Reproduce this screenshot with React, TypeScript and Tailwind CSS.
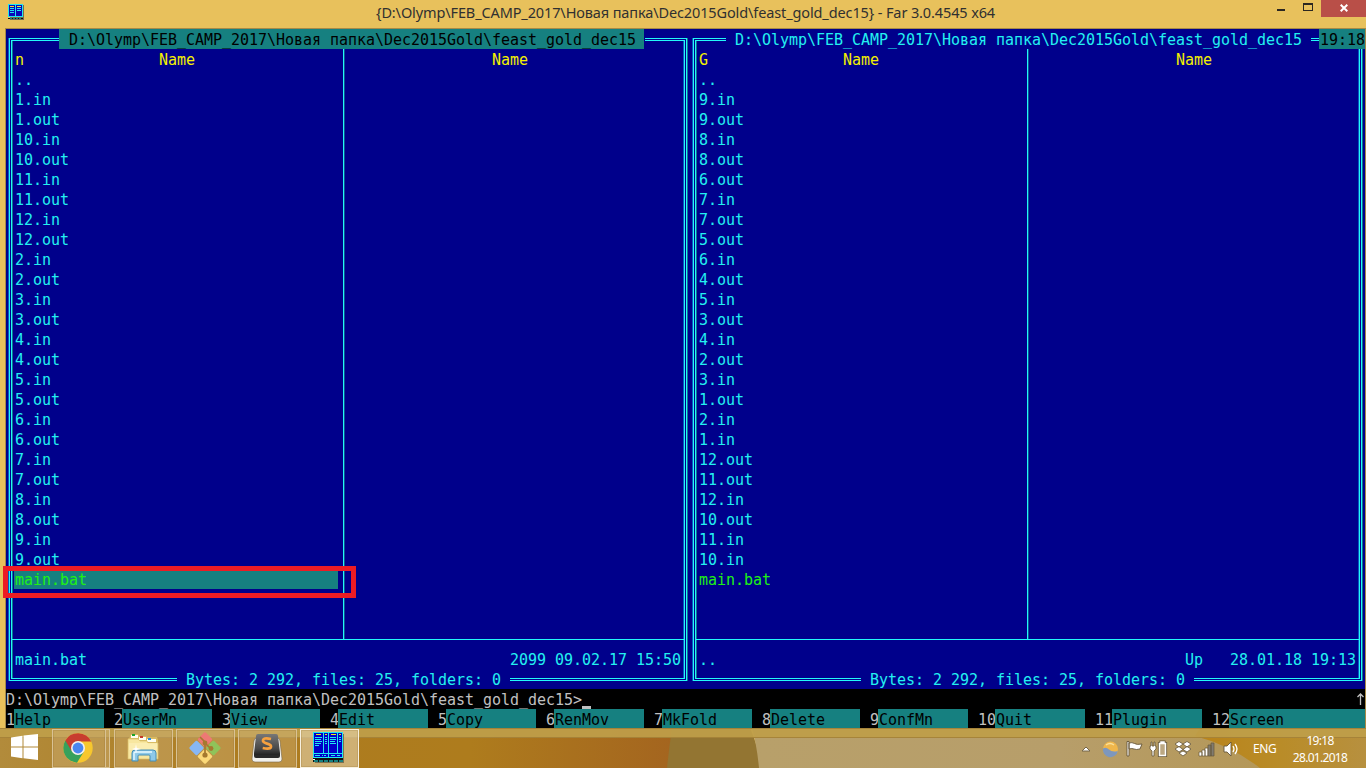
import React from "react";

const PATH = "D:\\Olymp\\FEB_CAMP_2017\\Новая папка\\Dec2015Gold\\feast_gold_dec15";

const leftFiles = [
  "..", "1.in", "1.out", "10.in", "10.out", "11.in", "11.out", "12.in", "12.out", "2.in", "2.out", "3.in", "3.out",
  "4.in", "4.out", "5.in", "5.out", "6.in", "6.out", "7.in", "7.out", "8.in", "8.out", "9.in", "9.out", "main.bat",
];
const rightFiles = [
  "..", "9.in", "9.out", "8.in", "8.out", "6.out", "7.in", "7.out", "5.out", "6.in", "4.out", "5.in", "3.out",
  "4.in", "2.out", "3.in", "1.out", "2.in", "1.in", "12.out", "11.out", "12.in", "10.out", "11.in", "10.in", "main.bat",
];
const keys = ["Help", "UserMn", "View", "Edit", "Copy", "RenMov", "MkFold", "Delete", "ConfMn", "Quit", "Plugin", "Screen"];

type PanelProps = {
  mark: string;
  files: string[];
  active?: boolean;
  status: React.ReactNode;
};

function Panel({ mark, files, active, status }: PanelProps) {
  return (
    <section className={`relative h-[660px] shrink-0 pl-[3px] pt-[9px] ${active ? "w-[684px]" : "w-[675px]"}`}>
      <div className={`h-[643px] border border-[#23f8f8] p-px shadow-[-1px_0_#0a58c0,1px_0_#0b7a90] ${active ? "w-[678px]" : "w-[669px]"}`}>
        <div className="flex h-full flex-col border border-[#23f8f8] pt-[8px] shadow-[inset_1px_0_#0b7a90,inset_-1px_0_#0a58c0]">
          <div className="flex h-[590px] shrink-0">
            <div className="w-[332px] shrink-0 border-r border-[#23f8f8] pl-[3px] shadow-[1px_0_#0b5a90]">
              <div className="flex h-5 text-[#f3f000]">
                <span className="w-[144px]">{mark}</span>
                <span>Name</span>
              </div>
              {files.map((f) => {
                const bat = f === "main.bat";
                return (
                  <div
                    key={f}
                    className={`h-5 ${bat ? "text-[#1ff014]" : ""} ${bat && active ? "-ml-px w-[324px] bg-[#168080] pl-px" : ""}`}
                  >
                    {f}
                  </div>
                );
              })}
            </div>
            <div className="grow pl-[148px] text-[#f3f000]">Name</div>
          </div>
          <div className="h-px shrink-0 bg-[#23f8f8]" />
          <div className="mt-[9px] flex h-5 shrink-0 justify-between pl-[3px] pr-[3px]">{status}</div>
        </div>
      </div>
      {active ? (
        <div className="absolute left-[53px] top-0 h-5 border-r border-[#00008b] bg-[#168080] pl-[10px] pr-[8px] text-black">{PATH}</div>
      ) : (
        <div className="absolute left-[36px] top-0 h-5 bg-[#00008b] pl-[9px] pr-[9px]">{PATH}</div>
      )}
      {!active && <div className="absolute left-[629px] top-0 h-5 w-[46px] bg-[#168080] pl-px text-black">19:18</div>}
      <div className="absolute left-[171px] top-[640px] h-5 bg-[#00008b] px-[9px]">Bytes: 2 292, files: 25, folders: 0</div>
    </section>
  );
}

function FarSmall() {
  return (
    <svg width="17" height="17" viewBox="0 0 17 17" shapeRendering="crispEdges">
      <path fill="#776b4c" d="M2 1h14v15H2z" />
      <path fill="#20e8f0" d="M0 0h15v13H0z" />
      <path fill="#0808b8" d="M1 1h6v11H1zM8 1h6v11H8z" />
      <path fill="#f0e030" d="M2 2h4v1H2zM9 2h4v1H9z" />
      <path fill="#20e8f0" d="M2 4h4v1H2zM2 6h4v1H2zM2 8h4v1H2zM9 4h4v1H9zM9 6h4v1H9z" />
      <path fill="#111" d="M0 14h15v1H0z" />
      <path fill="#168080" d="M2 14h2v1H2zM5 14h2v1H5zM8 14h2v1H8zM11 14h2v1h-2z" />
    </svg>
  );
}

function FarLarge() {
  return (
    <svg width="32" height="32" viewBox="0 0 32 32" shapeRendering="crispEdges">
      <path fill="#7d704e" d="M2 2h29v29H2z" />
      <path fill="#20e8f0" d="M0 0h30v26H0z" />
      <path fill="#0000c8" d="M1 1h9v20H1zM11 1h4v20h-4zM16 1h8v20h-8zM25 1h4v20h-4zM1 22h14v3H1zM16 22h13v3H16z" />
      <path fill="#f4ec10" d="M3 2h5v1H3zM12 2h2v1h-2zM18 2h5v1h-5zM26 2h2v1h-2z" />
      <path fill="#20e8f0" d="M2 5h7v1H2zM2 7h6v1H2zM2 9h7v1H2zM2 11h6v1H2zM2 13h4v1H2zM12 5h2v1h-2zM12 7h2v1h-2zM12 9h2v1h-2zM12 11h2v1h-2zM17 5h6v1h-6zM17 7h6v1h-6zM17 9h5v1h-5zM17 11h6v1h-6zM26 5h2v1h-2zM26 7h2v1h-2zM26 9h2v1h-2zM2 23h5v1H2zM9 23h1v1H9zM11 23h2v1h-2zM18 23h4v1h-4zM24 23h3v1h-3z" />
      <path fill="#111" d="M0 26h30v4H0z" />
      <path fill="#fff" d="M0 27h2v1H0z" />
      <path fill="#168080" d="M1 28h4v2H1zM6 28h4v2H6zM11 28h4v2h-4zM16 28h4v2h-4zM21 28h4v2h-4zM26 28h4v2h-4z" />
    </svg>
  );
}

function Chrome() {
  return (
    <svg width="30" height="30" viewBox="0 0 30 30">
      <circle cx="15" cy="15" r="14.7" fill="#f7c72e" />
      <path d="M15 15 L2.3 7.6 A14.7 14.7 0 0 0 14 29.7 L21 18.5Z" fill="#36a15c" />
      <path d="M2.3 7.6A14.7 14.7 0 0 1 28.2 8.5H15L8.6 18Z" fill="#c83c2f" />
      <circle cx="15" cy="15" r="7" fill="#f4f1ec" />
      <circle cx="15" cy="15" r="5.4" fill="#4a86f0" />
    </svg>
  );
}

function Explorer() {
  return (
    <svg width="32" height="30" viewBox="0 0 32 30">
      <path d="M3 4l1-3h7l1 2h7l1 1h10l1 3v18H1V6z" fill="#d8ba61" />
      <path d="M4 2h7v3H4zM12 4h7v3h-7zM20 6h9v3h-9z" fill="#fffdf0" />
      <path d="M5 1h3v2H5z" fill="#1ba32c" />
      <path d="M13 3h3v2h-3z" fill="#c6392a" />
      <path d="M21 5h3v2h-3z" fill="#258ee0" />
      <path d="M1 6h10l2 2h7l1 2h10v16H1z" fill="#f8e7a0" stroke="#dcc06c" strokeWidth=".7" />
      <path d="M2 10h28v7H2z" fill="#fdf2bd" opacity=".6" />
      <path d="M5 28V20q0-3 3-3h18q3 0 3 3v8h-6v-5q0-1-1-1H12q-1 0-1 1v5z" fill="#8ec9e8" stroke="#448eb6" />
      <path d="M7 27v-7q0-1 2-1h16" stroke="#e7faff" fill="none" strokeWidth="1.4" />
      <path d="M9 11l.7 4 4.300 1-4.300 1L9 21l-.7-4-3.300-1 3.300-1z" fill="#fff" />
    </svg>
  );
}

function Git() {
  return (
    <svg width="34" height="34" viewBox="0 0 34 34">
      <g transform="translate(17 17) rotate(45)">
        <rect x="-11.5" y="-11.5" width="11" height="11" rx="1.5" fill="#ed7974" />
        <rect x=".5" y="-11.5" width="11" height="11" rx="1.5" fill="#8fc35a" />
        <rect x="-11.5" y=".5" width="11" height="11" rx="1.5" fill="#87b7f5" />
        <rect x=".5" y=".5" width="11" height="11" rx="1.5" fill="#fbd979" />
      </g>
      <path d="M12 6l5 5v14M17 12l6 6" stroke="#a5792f" strokeWidth="1.700" fill="none" />
      <circle cx="17" cy="12" r="2.4" fill="#a5792f" />
      <circle cx="23" cy="17.500" r="2.4" fill="#a5792f" />
      <circle cx="17" cy="24" r="2.6" fill="#a5792f" />
    </svg>
  );
}

function Sublime() {
  return (
    <svg width="32" height="30" viewBox="0 0 32 30">
      <defs>
        <linearGradient id="key" x2="0" y2="1">
          <stop stopColor="#777" /><stop offset=".7" stopColor="#484848" /><stop offset="1" stopColor="#222" />
        </linearGradient>
      </defs>
      <path d="M3 8q0-3 3-3h20q3 0 3 3l2 18q0 3-3 3H4q-3 0-3-3z" fill="#f1f0ec" stroke="#776546" strokeWidth=".6" />
      <path d="M3 20h26v3q0 2-2 2H5q-2 0-2-2z" fill="#292929" />
      <path d="M5 3q0-2 2-2h18q2 0 2 2l2 17q0 2-2 2H5q-2 0-2-2z" fill="url(#key)" />
      <path d="M20 6q-8-2-8 1.800c0 3.200 8 2.400 8 5.600q0 3.300-8.300 1.600" fill="none" stroke="#f6a13f" strokeWidth="2.7" />
    </svg>
  );
}

function TrayIcons() {
  return (
    <svg width="160" height="18" viewBox="0 0 160 18">
      <path d="M1 11l4-4 4 4z" fill="#fff" stroke="#74664a" />
      <circle cx="29.500" cy="9" r="7.500" fill="#efb64b" />
      <path d="M22 8.500q3-2 6 1t8.800 1.500A7.500 7.500 0 0 1 22 8.500" fill="#7d97bd" />
      <path d="M25 5q4-3 8 0" fill="none" stroke="#f9df99" strokeWidth="1.500" />
      <path d="M46 1.500h2v14.500h-2zM48 3q3-1 5.500.500 2 1.500 7.500.500l-2 5q-4 1-6 0-2-1-5 0z" fill="#fff" stroke="#655638" strokeWidth=".9" />
      <path d="M78.500 3.500h6v12h-6zM80 2h3v1.500h-3z" fill="#bca883" stroke="#655638" strokeWidth="3.200" />
      <path d="M78.500 3.500h6v12h-6zM80 2h3v1.500h-3z" fill="#bca883" stroke="#fff" strokeWidth="1.500" />
      <path d="M70 2h1v4h2V2h1v4h1v3l-2 2v5h-2v-5l-2-2V6h1z" fill="#fff" stroke="#655638" strokeWidth=".8" />
      <g fill="#fff" stroke="#655638" strokeWidth=".8">
        <path d="M94 4l4-2.500 4 2.500-4 3zM102 4l4-2.500 4 2.500-4 3zM94 9l4-2.500 4 3-4 2.500zM102 9.500l4-3 4 2.500-4 3zM98 13l4-2 4 2-4 3z" />
      </g>
      <path d="M118 12h3v4h-3zM121 10h3v6h-3zM124 8h3v8h-3z" fill="#fff" stroke="#655638" strokeWidth=".7" />
      <path d="M127 5h3v11h-3zM130 3h3v13h-3z" fill="#817b70" stroke="#655638" strokeWidth=".7" />
      <path d="M143 6h3l4-4v14l-4-4h-3z" fill="#fff" stroke="#655638" strokeWidth=".9" />
      <path d="M152 6q2 3 0 6M154 4q4 5 0 10" fill="none" stroke="#fff" strokeWidth="1.300" />
    </svg>
  );
}

function Wallpaper() {
  return (
    <svg className="absolute inset-0" width="1366" height="40" viewBox="0 0 1366 40" preserveAspectRatio="none">
      <defs>
        <linearGradient id="w1">
          <stop stopColor="#b28b3b" /><stop offset=".35" stopColor="#ad7c20" /><stop offset=".7" stopColor="#ae7c1d" /><stop offset="1" stopColor="#a4651f" />
        </linearGradient>
        <linearGradient id="w2">
          <stop stopColor="#b8a06a" /><stop offset=".5" stopColor="#b79e6a" /><stop offset="1" stopColor="#b3944f" />
        </linearGradient>
        <linearGradient id="w3">
          <stop stopColor="#b9831a" /><stop offset=".5" stopColor="#b98c28" /><stop offset="1" stopColor="#b7903f" />
        </linearGradient>
      </defs>
      <path d="M0 0h672v40H0z" fill="url(#w1)" />
      <path d="M672 0q-3 20-5 40h95q-4-22-12-40z" fill="#937532" />
      <path d="M752 0q5 18 7 40h607V0z" fill="url(#w2)" />
      <path d="M1195 8q35 9 65 32h106V0H1200z" fill="url(#w3)" />
      <path d="M0 0h1366v10H0z" fill="#be9e49" fillOpacity=".93" />
      <path d="M0 0h1366v1H0zM0 9h1366v1H0z" fill="#8d6a2a" fillOpacity=".5" />
    </svg>
  );
}

const btn = "flex h-[39px] w-[59px] items-center justify-center border border-[#d9c294] bg-[#d3b57c]/40 pb-[2px] pr-[2px] outline outline-1 -outline-offset-2 outline-[#8a692c]/20";

export default function App() {
  return (
    <main className="relative flex h-[768px] w-[1366px] flex-col overflow-hidden bg-[#e8c15c] font-['DejaVu_Sans_Mono',monospace] text-[15px] leading-[22px] tracking-[-0.031px]">
      <header className="flex h-7 shrink-0 items-start pl-2">
        <div className="w-[368px] pt-1"><FarSmall /></div>
        <h1 className="w-[904px] whitespace-nowrap pt-px font-['Noto_Sans',sans-serif] text-[14.5px] tracking-[-0.12px] text-[#303030]">
          {"{" + PATH + "} - Far 3.0.4545 x64"}
        </h1>
      </header>
      <div className="absolute left-[1277px] top-0 flex h-[17px]">
        <span className="mt-[9px] h-[2px] w-2 bg-[#2b2721]" />
        <span className="ml-[18px] mt-[3px] h-2 w-[10px] border border-t-2 border-[#2b2721]" />
        <span className="ml-[8px] flex w-[45px] items-center justify-center bg-[#b94f48] pb-[2px]">
          <svg width="8" height="8" viewBox="0 0 8 8"><path d="M.7.7l6.600 6.600M7.300.7L.7 7.300" stroke="#fff" strokeWidth="2" /></svg>
        </span>
      </div>

      <div className="ml-[5px] flex h-[701px] w-[1361px] shrink-0 flex-col border-l border-r border-t border-[#a68a48] bg-[#00008b] text-[#23f0f0]">
        <div className="flex h-[660px] shrink-0 whitespace-pre">
          <Panel mark="n" files={leftFiles} active status={<><span>main.bat</span><span>2099 09.02.17 15:50</span></>} />
          <Panel mark="G" files={rightFiles} status={<><span>..</span><span>{"Up   28.01.18 19:13"}</span></>} />
        </div>
        <div className="flex h-5 shrink-0 justify-between bg-black text-[#c0c0c0]">
          <div className="flex whitespace-pre">
            {PATH + ">"}
            <span className="mt-[17px] h-[3px] w-[9px] bg-[#c0c0c0]" />
          </div>
          <svg className="mr-px mt-1" width="7" height="12" viewBox="0 0 7 12"><path d="M3.500 12V1.500M.5 4l3-3 3 3" fill="none" stroke="#c0c0c0" strokeWidth="1.300" /></svg>
        </div>
        <div className="flex h-[19px] shrink-0 bg-black">
          {keys.map((k, i) => (
            <React.Fragment key={k}>
              <span className={`shrink-0 text-right text-[#c0c0c0] ${i === 0 ? "w-2" : i < 9 ? "w-[18px]" : "w-[27px]"}`}>
                <span className="-mr-px">{i + 1}</span>
              </span>
              <span className={`bg-[#168080] pl-px text-black ${i === 11 ? "grow" : "w-[90px] shrink-0"}`}>{k}</span>
            </React.Fragment>
          ))}
        </div>
      </div>

      <div className="absolute left-[3px] top-[566px] h-8 w-[353px] border-[5px] border-[#ed1c24]" />

      <footer className="relative -mt-px h-10 shrink-0 font-['Noto_Sans',sans-serif] text-[12px] tracking-normal text-white">
        <Wallpaper />
        <div className="relative flex h-10 items-start">
          <div className="flex w-[52px] justify-end pr-[14px] pt-[6px]">
            <svg width="27" height="26" viewBox="0 0 27 26">
              <path d="M0 3.500l11.500-1.700v10.700H0zM12.500 1.600L27 0v12.500H12.500zM0 13.500h11.500v10.700L0 22.500zM12.500 13.500H27V26l-14.500-1.800z" fill="#fff" />
            </svg>
          </div>
          <div className="mt-px flex h-[39px]">
            <div className={`${btn} !w-[54px]`}><Chrome /></div>
            <div className="h-[39px] w-1 border border-l-0 border-[#d9c294] bg-[#d3b57c]/40" />
          </div>
          <div className="ml-[4px] mt-px flex gap-[3px]">
            <div className={btn}><Explorer /></div>
            <div className={btn}><Git /></div>
            <div className={btn}><Sublime /></div>
            <div className={`${btn} !border-[#f7f0df] !bg-[#e4d4ae]/60`}><FarLarge /></div>
          </div>
          <div className="ml-[722px] mt-[12px] w-[160px] shrink-0"><TrayIcons /></div>
          <span className="ml-[12px] mt-[10px] w-6 tracking-[-0.4px]">ENG</span>
          <div className="ml-[3px] mt-[4px] w-[80px] text-center leading-[17px] tracking-[-0.7px]">
            <div>19:18</div>
            <div>28.01.2018</div>
          </div>
        </div>
      </footer>
    </main>
  );
}
